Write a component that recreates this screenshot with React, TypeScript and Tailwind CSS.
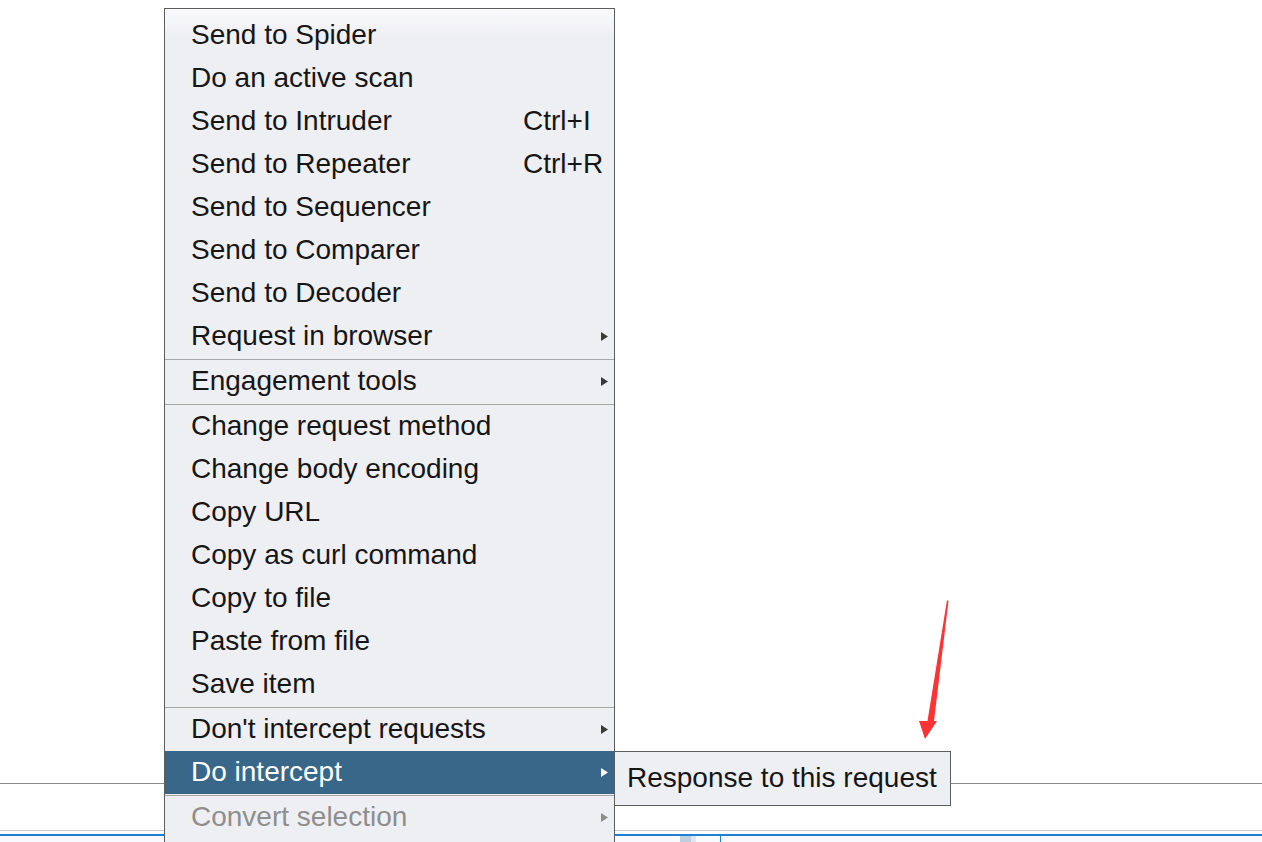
import React from "react";

type Entry =
    | { kind: "item"; label: string; shortcut?: string; sub?: boolean; active?: boolean; disabled?: boolean }
    | { kind: "sep" };

const entries: Entry[] = [
    {kind: "item", label: "Send to Spider"},
    {kind: "item", label: "Do an active scan"},
    {kind: "item", label: "Send to Intruder", shortcut: "Ctrl+I"},
    {kind: "item", label: "Send to Repeater", shortcut: "Ctrl+R"},
    {kind: "item", label: "Send to Sequencer"},
    {kind: "item", label: "Send to Comparer"},
    {kind: "item", label: "Send to Decoder"},
    {kind: "item", label: "Request in browser", sub: true},
    {kind: "sep"},
    {kind: "item", label: "Engagement tools", sub: true},
    {kind: "sep"},
    {kind: "item", label: "Change request method"},
    {kind: "item", label: "Change body encoding"},
    {kind: "item", label: "Copy URL"},
    {kind: "item", label: "Copy as curl command"},
    {kind: "item", label: "Copy to file"},
    {kind: "item", label: "Paste from file"},
    {kind: "item", label: "Save item"},
    {kind: "sep"},
    {kind: "item", label: "Don't intercept requests", sub: true},
    {kind: "item", label: "Do intercept", sub: true, active: true},
    {kind: "sep"},
    {kind: "item", label: "Convert selection", sub: true, disabled: true},
];

function SubArrow({color}: { color: string }) {
    return (
        <svg width="7" height="9" viewBox="0 0 7 9" className="shrink-0">
            <polygon points="0,0 7,4.5 0,9" fill={color}/>
        </svg>
    );
}

function MenuRow({entry}: { entry: Extract<Entry, { kind: "item" }> }) {
    const textColor = entry.active ? "text-white" : entry.disabled ? "text-[#8e8e8e]" : "text-[#161616]";
    const arrowColor = entry.active ? "#ffffff" : entry.disabled ? "#8e8e8e" : "#3a3a3a";
    return (
        <div
            className={
                "flex items-center h-[43px] pl-[26px] pr-[6px] " +
                (entry.active ? "bg-[#38678a] " : "") +
                textColor
            }
        >
            <span className="w-[332px] shrink-0 whitespace-nowrap leading-[41px] pb-[2px]">{entry.label}</span>
            <span className="whitespace-nowrap leading-[41px] pb-[2px]">{entry.shortcut ?? ""}</span>
            {entry.sub && <span className="ml-auto flex items-center"><SubArrow color={arrowColor}/></span>}
        </div>
    );
}

export default function App() {
    return (
        <div
            className="relative w-[1262px] h-[842px] overflow-hidden bg-white"
            style={{fontFamily: '"Liberation Sans", Arial, sans-serif'}}
        >
            {/* window behind the popup */}
            <div className="flex flex-col h-full">
                <div className="h-[783px] shrink-0"/>
                <div className="h-px shrink-0 bg-[#8a8a8a]"/>
                <div className="h-[46px] shrink-0"/>
                <div className="h-px shrink-0 bg-[#c8c8c8]"/>
                <div className="h-[3px] shrink-0"/>
                <div className="h-[2px] shrink-0 bg-[#1e7fd6]"/>
                <div className="flex flex-1 bg-[#f8fafd]">
                    <div className="w-[680px] shrink-0"/>
                    <div className="w-[11px] shrink-0 bg-[#bfcedc]"/>
                    <div className="w-[5px] shrink-0 bg-[#dfe5ed]"/>
                    <div className="w-[24px] shrink-0"/>
                    <div className="w-px shrink-0 bg-[#1e7fd6]"/>
                </div>
            </div>

            {/* context menu */}
            <div
                className="absolute left-[164px] top-[8px] w-[451px] border border-[#5c5c5c] pt-[5px] pb-[6px] text-[28px] bg-[linear-gradient(to_bottom,#fbfbfc,#eeeff3_28px)]">
                {entries.map((e, i) =>
                    e.kind === "sep" ? (
                        <div key={i} className="h-[2px] flex flex-col">
                            <div className="h-px"/>
                            <div className="h-px bg-[#a6a6a6]"/>
                        </div>
                    ) : (
                        <MenuRow key={i} entry={e}/>
                    )
                )}
            </div>

            {/* submenu */}
            <div
                className="absolute left-[614px] top-[751px] w-[337px] h-[55px] border border-[#5c5c5c] bg-[#eeeff3] pl-[12px] pt-[4px] text-[28px] text-[#161616]">
                <div className="h-[43px] leading-[43px] whitespace-nowrap">Response to this request</div>
            </div>

            {/* annotation arrow */}
            <svg className="absolute left-0 top-0 pointer-events-none" width="1262" height="842">
                <polygon
                    points="947,600 948.5,601 934,721 937,721 925,739 919,721 927.5,721"
                    fill="#ff3333"
                />
            </svg>
        </div>
    );
}
